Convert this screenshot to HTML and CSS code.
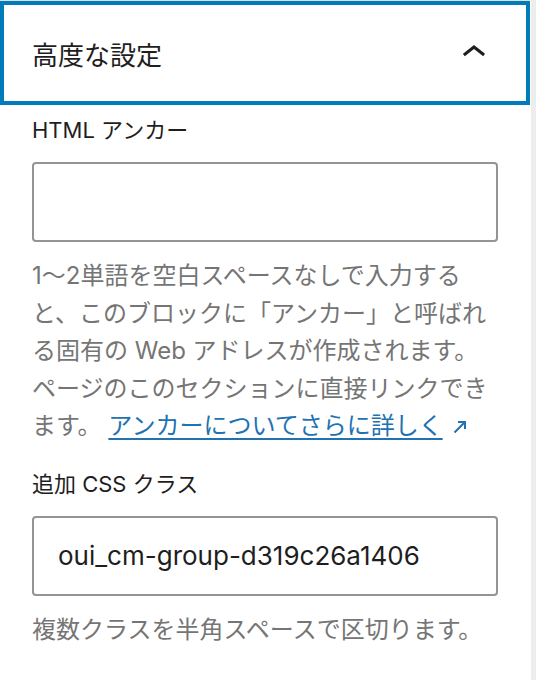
FILE: index.html
```html
<!DOCTYPE html>
<html lang="ja">
<head>
  <meta charset="UTF-8" />
  <meta name="viewport" content="width=device-width, initial-scale=1" />
  <title>高度な設定</title>
  <link rel="stylesheet" href="styles.css">
</head>
<body>
  <div class="sidebar">
    <div class="panel">
      <button class="panel-toggle" type="button" aria-expanded="true">
        <span class="panel-title">高度な設定</span>
        <svg class="chevron" viewBox="0 0 24 24" width="48" height="48" aria-hidden="true">
          <path d="M6.5 12.4L12 8l5.5 4.4-.9 1.2L12 10l-4.6 3.6-1-1.2z"></path>
        </svg>
      </button>

      <div class="panel-body">
        <div class="field">
          <label class="field-label" for="html-anchor">HTML アンカー</label>
          <input class="field-input" id="html-anchor" type="text" />
          <p class="field-help">1〜2単語を空白スペースなしで入力すると、このブロックに「アンカー」と呼ばれる固有の Web アドレスが作成されます。ページのこのセクションに直接リンクできます。 <a class="external-link" href="#"><span class="external-link-text">アンカーについてさらに詳しく</span><svg class="external-link-icon" viewBox="0 0 14 14" width="14" height="14" aria-hidden="true"><path d="M1.5 12.5L12 2M5 2h7v7"></path></svg></a></p>
        </div>

        <div class="field">
          <label class="field-label" for="css-class">追加 CSS クラス</label>
          <input class="field-input" id="css-class" type="text" value="oui_cm-group-d319c26a1406" />
          <p class="field-help">複数クラスを半角スペースで区切ります。</p>
        </div>
      </div>
    </div>
    <div class="track"></div>
  </div>
</body>
</html>
```

FILE: styles.css
```css
body {
  margin: 0;
  padding: 0;
  background-color: #fff;
  font-family: Inter, "Noto Sans CJK JP", sans-serif;
  color: #1e1e1e;
}

.sidebar {
  display: flex;
  min-height: 680px;
}

.panel {
  width: 530px;
  border-top: 1px solid #e0e0e0;
}

.track {
  flex: 1;
  border-left: 1px solid #fff;
  background-color: #ededed;
}

.panel-toggle {
  display: flex;
  align-items: center;
  justify-content: space-between;
  width: 100%;
  height: 104px;
  padding: 0 32px;
  border: none;
  background: none;
  box-shadow: inset 0 0 0 4px #007cba;
  font-family: inherit;
  color: #1e1e1e;
  cursor: pointer;
}

.panel-title {
  font-size: 26px;
  font-weight: 400;
}

.chevron {
  fill: #1e1e1e;
}

.panel-body {
  padding: 9px 32px 32px;
}

.field {
  margin-bottom: 23px;
}

.field-label {
  display: block;
  font-size: 22px;
  line-height: 32px;
  margin-bottom: 16px;
}

.field-input {
  display: block;
  box-sizing: border-box;
  width: 100%;
  height: 80px;
  margin: 0;
  padding: 0 24px;
  border: 2px solid #949494;
  border-radius: 4px;
  font-family: inherit;
  font-size: 26px;
  color: #1e1e1e;
  background-color: #fff;
}

.field-help {
  margin: 15px 0 0;
  font-size: 24px;
  line-height: 37.5px;
  color: #757575;
  line-break: strict;
}

.external-link {
  color: #2271b1;
  text-decoration: none;
}

.external-link-text {
  text-decoration: underline;
  text-decoration-thickness: 2px;
  text-underline-offset: 4px;
}

.external-link-icon {
  margin-left: 10px;
  fill: none;
  stroke: #2271b1;
  stroke-width: 2;
}
```
